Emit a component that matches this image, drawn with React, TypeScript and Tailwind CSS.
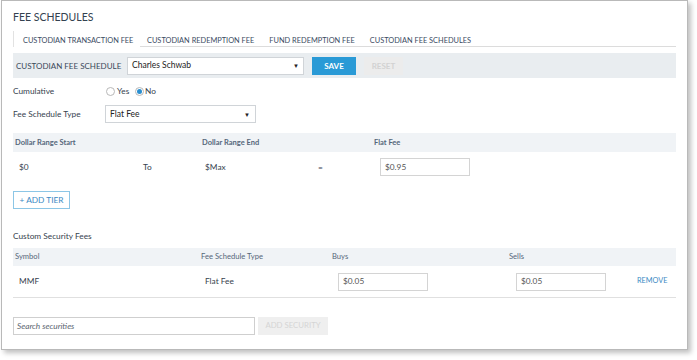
import React from "react";

const lato = { fontFamily: 'Lato, "Liberation Sans", sans-serif' };

function Caret() {
    return <span className="text-[6px] text-[#222]">▼</span>;
}

function Input({ value, className }: { value: string; className: string }) {
    return (
        <div
            className={`flex h-[18px] items-center border border-[#d4d4d4] bg-white px-[4px] text-[8.3px] text-[#555] ${className}`}
        >
            {value}
        </div>
    );
}

export default function App() {
    return (
        <div className="h-[360px] w-[697px] bg-white" style={lato}>
            <div className="ml-[1px] h-[350px] w-[687px] border border-[#b9b9b9] bg-white px-[11px] shadow-[3px_3px_5px_rgba(0,0,0,0.25)]">
                {/* title */}
                <div className="flex h-[29px] items-end pb-[4px] text-[10.5px] text-[#33414f]">
                    FEE SCHEDULES
                </div>

                {/* tabs */}
                <div className="mt-[1px] flex h-[16px] items-end text-[7.4px] text-[#3a4b62]">
                    <div className="flex h-[16px] w-[127px] items-start border-l border-[#e2e2e2] bg-white pl-[9px] pt-[4px]">
                        CUSTODIAN TRANSACTION FEE
                    </div>
                    <div className="flex h-[16px] flex-1 items-start gap-[15px] border-b border-[#dcdcdc] pl-[7px] pt-[4px]">
                        <span>CUSTODIAN REDEMPTION FEE</span>
                        <span>FUND REDEMPTION FEE</span>
                        <span>CUSTODIAN FEE SCHEDULES</span>
                    </div>
                </div>

                {/* schedule bar */}
                <div className="mt-[6px] flex h-[25px] items-center bg-[#e9edf0] pl-[3px]">
                    <span className="w-[111px] text-[8px] text-[#3a4a5a]">CUSTODIAN FEE SCHEDULE</span>
                    <div className="flex h-[18px] w-[177px] items-center justify-between border border-[#d0d4d8] bg-white pl-[4px] pr-[4px] text-[8.5px] text-[#222]">
                        <span>Charles Schwab</span>
                        <Caret />
                    </div>
                    <div className="ml-[8px] flex h-[18px] w-[44px] items-center justify-center bg-[#2a9ad6] text-[8px] font-bold text-white">
                        SAVE
                    </div>
                    <div className="ml-[8px] flex h-[18px] w-[39px] items-center justify-center bg-[#ececec] text-[8px] font-bold text-[#d2d2d2]">
                        RESET
                    </div>
                </div>

                {/* cumulative */}
                <div className="mt-[5px] flex h-[16px] items-center text-[8.3px] text-[#36424e]">
                    <span className="w-[93px]">Cumulative</span>
                    <span className="h-[9px] w-[9px] rounded-full border border-[#b8b8b8] bg-white" />
                    <span className="ml-[2px] w-[18px]">Yes</span>
                    <span className="flex h-[9px] w-[9px] items-center justify-center rounded-full border border-[#b8b8b8] bg-white">
                        <span className="h-[5px] w-[5px] rounded-full bg-[#2a8fd0]" />
                    </span>
                    <span className="ml-[1px]">No</span>
                </div>

                {/* fee schedule type */}
                <div className="mt-[6px] flex h-[18px] items-center text-[8.3px] text-[#36424e]">
                    <span className="w-[92px]">Fee Schedule Type</span>
                    <div className="flex h-[18px] w-[151px] items-center justify-between border border-[#d0d4d8] bg-white pl-[4px] pr-[5px] text-[8.5px] text-[#222]">
                        <span>Flat Fee</span>
                        <Caret />
                    </div>
                </div>

                {/* tiers */}
                <div className="mt-[10px] flex h-[19px] items-center bg-[#f0f3f6] pl-[2px] text-[7.5px] font-bold text-[#55677a]">
                    <span className="w-[187px]">Dollar Range Start</span>
                    <span className="w-[172px]">Dollar Range End</span>
                    <span>Flat Fee</span>
                </div>
                <div className="mt-[6px] flex h-[18px] items-center text-[8.3px] text-[#36424e]">
                    <span className="w-[130px] pl-[6px]">$0</span>
                    <span className="w-[62px]">To</span>
                    <span className="w-[113px]">$Max</span>
                    <span className="w-[62px]">=</span>
                    <Input value="$0.95" className="w-[90px]" />
                </div>

                <div className="mt-[15px] flex h-[18px] w-[57px] items-center justify-center border border-[#8cc6e6] text-[8.3px] text-[#3b8ac4]">
                    + ADD TIER
                </div>

                <div className="mt-[20px] flex h-[14px] items-center text-[8.3px] text-[#36424e]">Custom Security Fees</div>

                {/* securities */}
                <div className="mt-[5px] flex h-[18px] items-center bg-[#f0f3f6] pl-[2px] text-[7.6px] text-[#55677a]">
                    <span className="w-[186px]">Symbol</span>
                    <span className="w-[131px]">Fee Schedule Type</span>
                    <span className="w-[177px]">Buys</span>
                    <span>Sells</span>
                </div>
                <div className="flex h-[32px] items-center border-b border-[#e0e0e0] text-[8.3px] text-[#36424e]">
                    <span className="w-[192px] pl-[6px]">MMF</span>
                    <span className="w-[133px]">Flat Fee</span>
                    <Input value="$0.05" className="w-[90px]" />
                    <span className="w-[88px]" />
                    <Input value="$0.05" className="w-[90px]" />
                    <span className="ml-[31px] text-[7.3px] text-[#3b8ac4]">REMOVE</span>
                </div>

                <div className="mt-[19px] flex h-[18px] items-center">
                    <div className="flex h-[18px] w-[242px] items-center border border-[#cfcfcf] px-[3px] text-[8.3px] italic text-[#5b6670]">
                        Search securities
                    </div>
                    <div className="ml-[3px] flex h-[18px] w-[70px] items-center justify-center bg-[#efefef] text-[7.8px] text-[#d5d5d5]">
                        ADD SECURITY
                    </div>
                </div>
            </div>
        </div>
    );
}
